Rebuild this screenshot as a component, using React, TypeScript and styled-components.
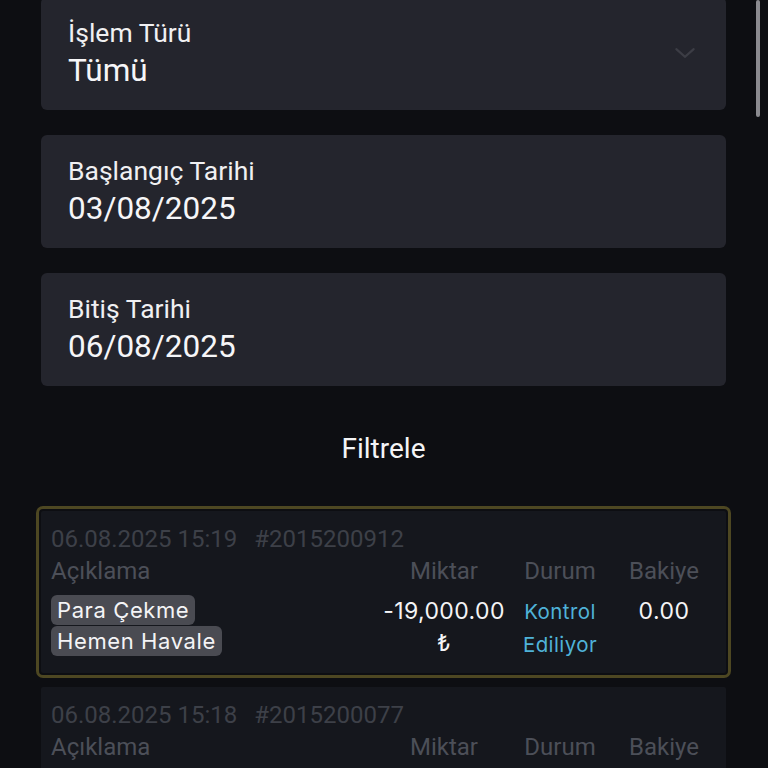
import React from "react";
import styled, { createGlobalStyle } from "styled-components";

const GlobalStyle = createGlobalStyle`
  html, body {
    margin: 0;
    padding: 0;
    background: #0d0e12;
    font-family: Roboto, "Liberation Sans", sans-serif;
    color: #f2f2f4;
  }
  #root {
    min-height: 768px;
    overflow: hidden;
  }
`;

const transactions = [
  {
    id: "2015200912",
    date: "06.08.2025 15:19",
    tags: ["Para Çekme", "Hemen Havale"],
    amount: "-19,000.00",
    status: ["Kontrol", "Ediliyor"],
    balance: "0.00",
    selected: true,
  },
  {
    id: "2015200077",
    date: "06.08.2025 15:18",
    tags: ["Para Çekme", "Hemen Havale"],
    amount: "-19,000.00",
    status: ["Kontrol", "Ediliyor"],
    balance: "0.00",
    selected: false,
  },
];

export default function App() {
  return (
    <>
      <GlobalStyle />
      <Page>
        <Form>
          <Field $first>
            <FieldText>
              <Label>İşlem Türü</Label>
              <Value>Tümü</Value>
            </FieldText>
            <Chevron viewBox="0 0 20 12">
              <path d="M2 2 L10 9 L18 2" fill="none" stroke="#3c3d45" strokeWidth="2" strokeLinecap="round" />
            </Chevron>
          </Field>
          <Field>
            <FieldText>
              <Label>Başlangıç Tarihi</Label>
              <Value>03/08/2025</Value>
            </FieldText>
          </Field>
          <Field>
            <FieldText>
              <Label>Bitiş Tarihi</Label>
              <Value>06/08/2025</Value>
            </FieldText>
          </Field>
        </Form>

        <FilterButton>Filtrele</FilterButton>

        <List>
          {transactions.map((t) => (
            <Card key={t.id} $selected={t.selected}>
              <Meta>
                <span>{t.date}</span>
                <span>#{t.id}</span>
              </Meta>
              <Grid>
                <Head $align="left">Açıklama</Head>
                <Head>Miktar</Head>
                <Head>Durum</Head>
                <Head>Bakiye</Head>
                <Tags>
                  {t.tags.map((tag) => (
                    <Tag key={tag}>{tag}</Tag>
                  ))}
                </Tags>
                <Amount>
                  {t.amount}
                  <br />₺
                </Amount>
                <Status>
                  {t.status[0]}
                  <br />
                  {t.status[1]}
                </Status>
                <Balance>{t.balance}</Balance>
              </Grid>
            </Card>
          ))}
        </List>

        <ScrollThumb />
      </Page>
    </>
  );
}

const Page = styled.div`
  position: relative;
  height: 768px;
  overflow: hidden;
  padding: 0 42px 0 41px;
`;

const Form = styled.div`
  display: flex;
  flex-direction: column;
  gap: 25px;
`;

const Field = styled.div<{ $first?: boolean }>`
  display: flex;
  align-items: center;
  justify-content: space-between;
  height: 113px;
  box-sizing: border-box;
  margin-top: ${(p) => (p.$first ? "-3px" : "0")};
  padding: 20px 30px 19px 27px;
  background: #24252d;
  border-radius: 6px;
`;

const FieldText = styled.div`
  display: flex;
  flex-direction: column;
  gap: 2px;
`;

const Label = styled.div`
  font-size: 26.5px;
  line-height: 32px;
  color: #f0f0f2;
`;

const Value = styled.div`
  font-size: 31.5px;
  line-height: 40px;
  color: #f6f6f8;
`;

const Chevron = styled.svg`
  width: 22px;
  height: 13px;
  margin-bottom: 2px;
`;

const FilterButton = styled.div`
  height: 125px;
  display: flex;
  align-items: center;
  justify-content: center;
  font-size: 28px;
  color: #f4f4f6;
`;

const List = styled.div`
  display: flex;
  flex-direction: column;
  gap: 14px;
`;

const Card = styled.div<{ $selected: boolean }>`
  background: #15171d;
  padding: 12px 12px 12px 10px;
  outline: ${(p) => (p.$selected ? "3px solid #4d4722" : "none")};
  outline-offset: 2px;
  border-radius: 2px;
`;

const Meta = styled.div`
  display: flex;
  gap: 17px;
  font-size: 24px;
  line-height: 32px;
  color: #3d4048;
`;

const Grid = styled.div`
  display: grid;
  grid-template-columns: 1fr 124px 96px 100px;
  column-gap: 6px;
  align-items: start;
`;

const Head = styled.div<{ $align?: "left" | "center" }>`
  font-size: 24px;
  line-height: 32px;
  color: #4c4f58;
  text-align: ${(p) => p.$align ?? "center"};
  margin-bottom: 8px;
`;

const Tags = styled.div`
  display: flex;
  flex-direction: column;
  align-items: flex-start;
  gap: 1px;
`;

const Tag = styled.span`
  background: #4a4b52;
  color: #f4f4f6;
  font-family: Inter, Roboto, sans-serif;
  font-size: 22px;
  letter-spacing: 0.6px;
  line-height: 30px;
  padding: 0 6px;
  border-radius: 6px;
`;

const Amount = styled.div`
  font-family: Inter, Roboto, sans-serif;
  font-size: 23px;
  letter-spacing: 0.4px;
  line-height: 32px;
  text-align: center;
  color: #f4f4f6;
  white-space: nowrap;
`;

const Status = styled.div`
  font-family: Inter, Roboto, sans-serif;
  font-size: 20.5px;
  letter-spacing: 0.4px;
  line-height: 33px;
  text-align: center;
  color: #4fb2d8;
`;

const Balance = styled.div`
  font-family: Inter, Roboto, sans-serif;
  font-size: 23px;
  letter-spacing: 0.5px;
  line-height: 32px;
  text-align: center;
  color: #f4f4f6;
`;

const ScrollThumb = styled.div`
  position: absolute;
  top: 0;
  right: 8px;
  width: 4px;
  height: 117px;
  border-radius: 2px;
  background: #8b8b90;
`;
